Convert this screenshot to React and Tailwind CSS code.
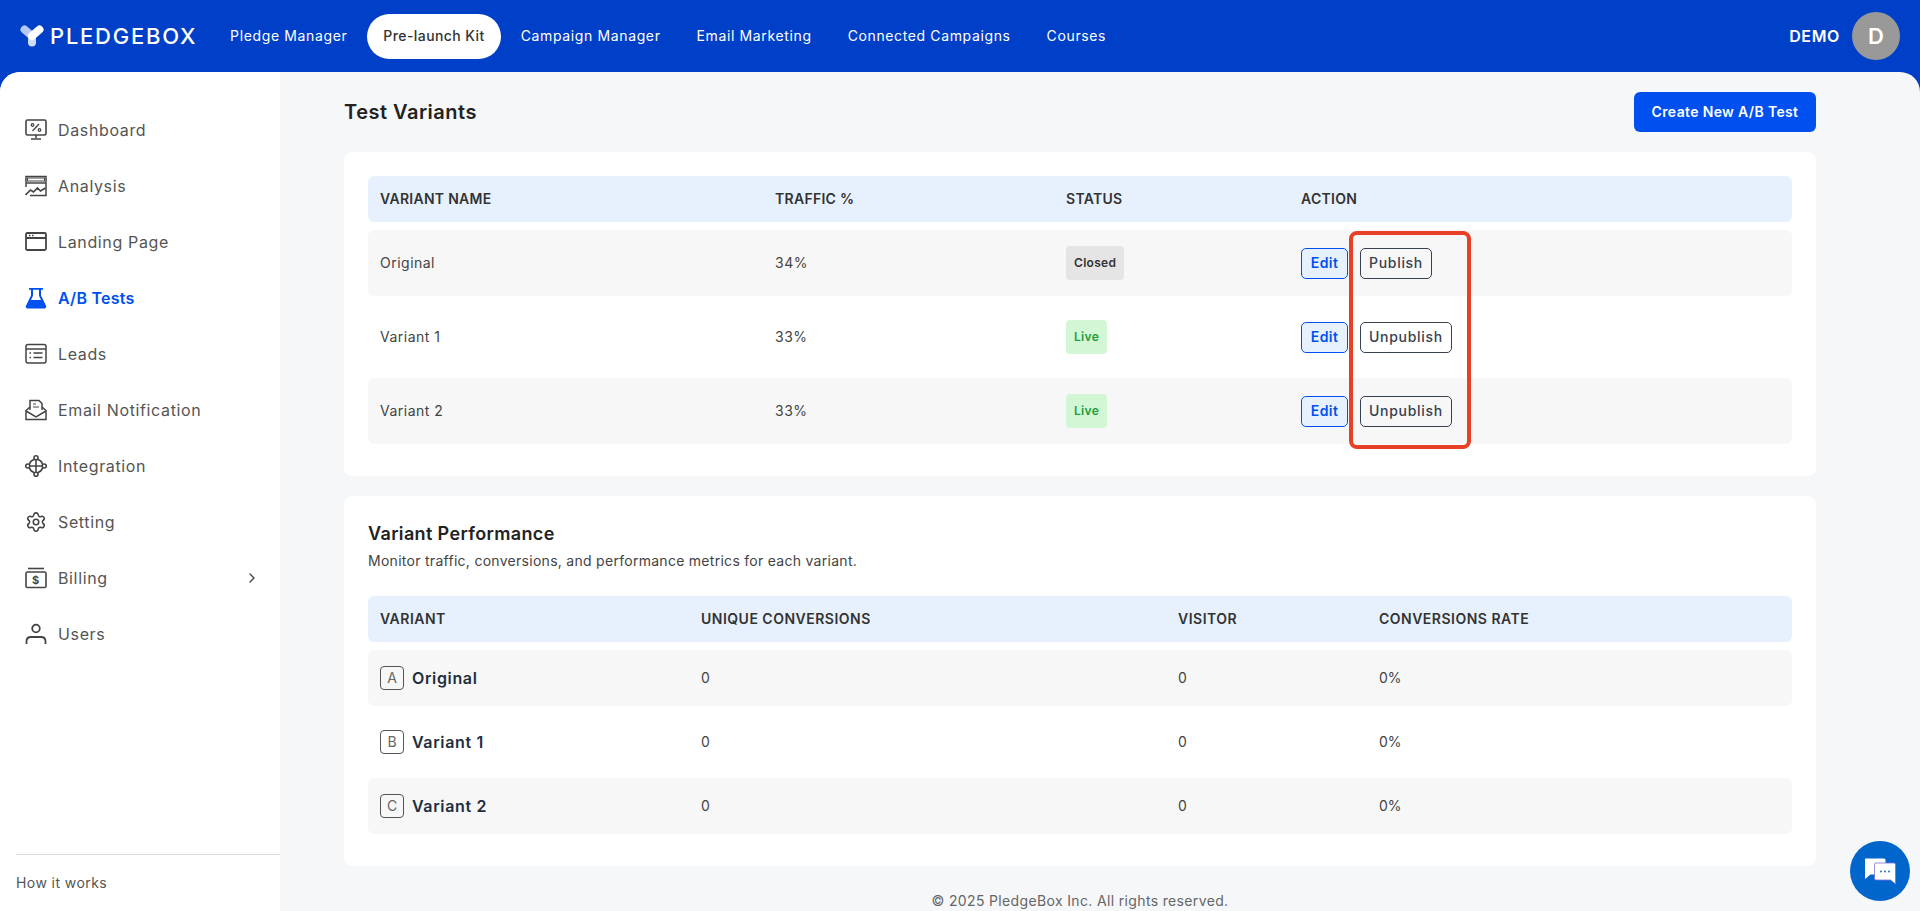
import { ChevronRight, Settings } from 'lucide-react';

const navLinks = ['Pledge Manager', 'Pre-launch Kit', 'Campaign Manager', 'Email Marketing', 'Connected Campaigns', 'Courses'];

const IconDashboard = () => (
  <svg viewBox="0 0 22 22" className="w-[22px] h-[22px]" fill="none" stroke="currentColor" strokeWidth="1.6">
    <rect x="1" y="1" width="20" height="15" rx="1.5" />
    <path d="M11 16v3M6 20h10" />
    <path d="M7.5 12l6.5-7" strokeWidth="1.3" />
    <circle cx="7.5" cy="6" r="1.3" strokeWidth="1.2" />
    <circle cx="14.5" cy="11" r="1.3" strokeWidth="1.2" />
  </svg>
);

const IconAnalysis = () => (
  <svg viewBox="0 0 22 22" className="w-[22px] h-[22px]" fill="none" stroke="currentColor" strokeWidth="1.5">
    <path d="M1 12V1.5h20v19H5" />
    <path d="M1 8h20" />
    <rect x="2.5" y="3" width="17" height="3" strokeWidth="1" />
    <path d="M0.5 20l5-5 3 2 4-4 3 3 5-3" strokeWidth="1.7" />
  </svg>
);

const IconLanding = () => (
  <svg viewBox="0 0 22 22" className="w-[22px] h-[22px]" fill="none" stroke="currentColor" strokeWidth="1.8">
    <rect x="1" y="2" width="20" height="17" rx="1.5" />
    <path d="M1 7h20" />
    <path d="M4 4.5h1.5M7 4.5h1.5" strokeWidth="1.3" />
  </svg>
);

const IconFlask = () => (
  <svg viewBox="0 0 22 22" className="w-[22px] h-[22px]" fill="currentColor">
    <path d="M4 1h14v1.800h-2v5.600l5 10.400c.6 1.300 0 2.600-1.600 2.600H2.600C1 21.400.4 20.100 1 18.800L6 8.400V2.800H4V1zm4 1.800v6L6 13h10l-2-4.200v-6H8z" fillRule="evenodd" />
  </svg>
);

const IconLeads = () => (
  <svg viewBox="0 0 22 22" className="w-[22px] h-[22px]" fill="none" stroke="currentColor" strokeWidth="1.5">
    <rect x="1" y="1.500" width="20" height="18.500" rx="2" />
    <path d="M1 6h20" />
    <path d="M4.500 10h1.500M8.500 10h9M4.500 14.500h1.500M8.500 14.500h9" strokeWidth="1.700" />
  </svg>
);

const IconEmail = () => (
  <svg viewBox="0 0 22 22" className="w-[22px] h-[22px]" fill="none" stroke="currentColor" strokeWidth="1.5">
    <path d="M5 11V1.500h9l3 3V11" />
    <path d="M8 5h3M8 8h6" strokeWidth="1.2" />
    <path d="M5 8l-4 3.500V20.500h20V11.500L17 8" />
    <path d="M1 12l10 6 10-6" />
  </svg>
);

const IconIntegration = () => (
  <svg viewBox="0 0 22 22" className="w-[22px] h-[22px]" fill="none" stroke="currentColor" strokeWidth="1.6">
    <circle cx="11" cy="2.800" r="2" />
    <circle cx="11" cy="19.200" r="2" />
    <circle cx="2.800" cy="11" r="2" />
    <circle cx="19.200" cy="11" r="2" />
    <path d="M11 5v12M5 11h12" />
    <path d="M9 4.500C6.800 5.200 5.200 6.800 4.500 9M13 4.500c2.200.7 3.800 2.300 4.500 4.500M9 17.500c-2.200-.7-3.800-2.300-4.500-4.500M13 17.500c2.200-.7 3.800-2.300 4.500-4.500" />
  </svg>
);

const IconBilling = () => (
  <svg viewBox="0 0 22 22" className="w-[22px] h-[22px]" fill="none" stroke="currentColor" strokeWidth="1.6">
    <path d="M3 1.500h16" />
    <rect x="1" y="5" width="20" height="15.500" rx="1.500" />
    <text x="11" y="17" textAnchor="middle" fontSize="11" fontWeight="700" fill="currentColor" stroke="none" fontFamily="Inter, sans-serif">$</text>
  </svg>
);

const IconUsers = () => (
  <svg viewBox="0 0 22 22" className="w-[22px] h-[22px]" fill="none" stroke="currentColor" strokeWidth="1.8">
    <circle cx="11" cy="5.500" r="3.800" />
    <path d="M1.500 21v-2.500c0-3 2-4.500 4.500-4.500h10c2.500 0 4.500 1.500 4.500 4.500V21" />
  </svg>
);

const sideItems = [
  { label: 'Dashboard', icon: <IconDashboard /> },
  { label: 'Analysis', icon: <IconAnalysis /> },
  { label: 'Landing Page', icon: <IconLanding /> },
  { label: 'A/B Tests', icon: <IconFlask />, active: true },
  { label: 'Leads', icon: <IconLeads /> },
  { label: 'Email Notification', icon: <IconEmail /> },
  { label: 'Integration', icon: <IconIntegration /> },
  { label: 'Setting', icon: <Settings className="w-[22px] h-[22px]" strokeWidth={1.7} /> },
  { label: 'Billing', icon: <IconBilling />, arrow: true },
  { label: 'Users', icon: <IconUsers /> },
];

const variants = [
  { name: 'Original', traffic: '34%', status: 'Closed', action: 'Publish' },
  { name: 'Variant 1', traffic: '33%', status: 'Live', action: 'Unpublish' },
  { name: 'Variant 2', traffic: '33%', status: 'Live', action: 'Unpublish' },
];

const performance = [
  { letter: 'A', name: 'Original' },
  { letter: 'B', name: 'Variant 1' },
  { letter: 'C', name: 'Variant 2' },
];

function Logo() {
  return (
    <div className="flex items-center gap-[6px] text-white">
      <svg viewBox="0 0 24 22" className="w-6 h-[22px]" fill="none" strokeLinecap="round" strokeWidth="8">
        <path d="M4.500 4.500L12 11" stroke="#b5c9f7" />
        <path d="M12 11v6.500" stroke="#cfdcf9" />
        <path d="M19.500 4.500L12 11" stroke="#ffffff" />
      </svg>
      <span className="text-[22px] font-medium tracking-[0.08em]">PLEDGEBOX</span>
    </div>
  );
}

function Header() {
  return (
    <header className="h-[72px] shrink-0 flex items-center pl-5 pr-5">
      <Logo />
      <nav className="flex items-center ml-[15px]">
        {navLinks.map((link) => (
          <a
            key={link}
            className={
              link === 'Pre-launch Kit'
                ? 'h-[45px] mx-[2px] px-4 flex items-center rounded-full bg-white text-[#333] text-sm font-medium tracking-[0.03em]'
                : 'h-[45px] px-[18px] flex items-center text-white text-sm tracking-[0.045em]'
            }
          >
            {link}
          </a>
        ))}
      </nav>
      <div className="ml-auto flex items-center gap-3">
        <span className="text-white text-base font-semibold tracking-[0.04em]">DEMO</span>
        <div className="w-12 h-12 rounded-full bg-[#999] text-white text-[22px] font-semibold flex items-center justify-center">D</div>
      </div>
    </header>
  );
}

function Sidebar() {
  return (
    <aside className="w-[280px] shrink-0 bg-white flex flex-col pt-[30px]">
      {sideItems.map((item) => (
        <a
          key={item.label}
          className={`h-14 flex items-center pl-[25px] pr-5 gap-[11px] text-base ${
            item.active ? 'text-[#0050f0] font-semibold tracking-[0.015em]' : 'text-[#555] tracking-[0.04em]'
          }`}
        >
          <span className={item.active ? 'text-[#0050f0]' : 'text-[#444]'}>{item.icon}</span>
          {item.label}
          {item.arrow && <ChevronRight className="w-4 h-4 ml-auto text-[#444]" />}
        </a>
      ))}
      <div className="mt-auto ml-4 border-t border-[#ddd] h-[57px] flex items-center text-sm text-[#555] tracking-[0.03em]">
        How it works
      </div>
    </aside>
  );
}

function VariantsTable() {
  const cols = 'grid grid-cols-[395px_291px_235px_1fr] items-center px-3';
  return (
    <section className="mt-5 bg-white rounded-lg px-6 pt-6 pb-8">
      <div className={`${cols} h-[46px] bg-[#e7f1fe] rounded-md text-sm font-semibold text-[#333] tracking-[0.02em]`}>
        <div>VARIANT NAME</div>
        <div>TRAFFIC %</div>
        <div>STATUS</div>
        <div>ACTION</div>
      </div>
      <div className="mt-2 flex flex-col gap-2">
        {variants.map((v, i) => (
          <div key={v.name} className={`${cols} h-[66px] rounded-md text-sm text-[#444] tracking-[0.035em] ${i % 2 === 0 ? 'bg-[#f7f7f7]' : 'bg-white'}`}>
            <div>{v.name}</div>
            <div>{v.traffic}</div>
            <div>
              {v.status === 'Closed' ? (
                <span className="inline-flex items-center h-[34px] px-2 rounded bg-[#e5e5e5] text-xs font-semibold text-[#333] tracking-[0.025em]">Closed</span>
              ) : (
                <span className="inline-flex items-center h-[34px] px-2 rounded bg-[#d3f6d5] text-xs font-semibold text-[#1b9e3c] tracking-[0.025em]">Live</span>
              )}
            </div>
            <div className="flex items-center gap-3">
              <button className="h-[31px] w-[47px] rounded-[5px] border border-[#0050f0] bg-[#e7f1fe] text-sm font-semibold text-[#0050f0] tracking-[0.03em]">Edit</button>
              <button className="h-[31px] px-2 rounded-[5px] border border-[#374151] text-sm font-medium text-[#374151] tracking-[0.05em]">{v.action}</button>
            </div>
          </div>
        ))}
      </div>
    </section>
  );
}

function PerformanceTable() {
  const cols = 'grid grid-cols-[321px_477px_201px_1fr] items-center px-3';
  return (
    <section className="mt-5 bg-white rounded-lg px-6 pt-6 pb-8">
      <h2 className="text-lg font-semibold text-[#222] leading-[27px] tracking-[0.02em]">Variant Performance</h2>
      <p className="mt-1 text-sm text-[#444] tracking-[0.02em]">Monitor traffic, conversions, and performance metrics for each variant.</p>
      <div className={`${cols} mt-[25px] h-[46px] bg-[#e7f1fe] rounded-md text-sm font-semibold text-[#333] tracking-[0.035em]`}>
        <div>VARIANT</div>
        <div>UNIQUE CONVERSIONS</div>
        <div>VISITOR</div>
        <div>CONVERSIONS RATE</div>
      </div>
      <div className="mt-2 flex flex-col gap-2">
        {performance.map((p, i) => (
          <div key={p.name} className={`${cols} h-14 rounded-md text-sm text-[#444] ${i % 2 === 0 ? 'bg-[#f7f7f7]' : 'bg-white'}`}>
            <div className="flex items-center gap-2">
              <span className="w-6 h-6 rounded border border-[#555] flex items-center justify-center text-sm text-[#666]">{p.letter}</span>
              <span className="text-base font-semibold text-[#222e3e] tracking-[0.04em]">{p.name}</span>
            </div>
            <div>0</div>
            <div>0</div>
            <div>0%</div>
          </div>
        ))}
      </div>
    </section>
  );
}

export default function App() {
  return (
    <div className="relative h-screen overflow-hidden flex flex-col bg-[#0040c8] font-['Inter',sans-serif]">
      <Header />
      <div className="flex-1 min-h-0 flex rounded-t-[20px] overflow-hidden bg-[#f6f7f9]">
        <Sidebar />
        <main className="flex-1 pt-5 pl-16 pr-[104px]">
          <div className="h-10 flex items-center justify-between">
            <h1 className="text-xl font-semibold text-[#222] tracking-[0.025em]">Test Variants</h1>
            <button className="h-10 w-[182px] rounded-md bg-[#0050f0] text-white text-sm font-semibold tracking-[0.025em]">Create New A/B Test</button>
          </div>
          <VariantsTable />
          <PerformanceTable />
          <footer className="mt-[25px] text-center text-sm leading-5 text-[#666] tracking-[0.025em]">© 2025 PledgeBox Inc. All rights reserved.</footer>
        </main>
      </div>

      {/* annotation over the action column */}
      <div className="absolute left-[1349px] top-[231px] w-[122px] h-[218px] border-4 border-[#e83f26] rounded-lg pointer-events-none" />

      <button className="absolute left-[1850px] top-[841px] w-[60px] h-[60px] rounded-full bg-[#0066cc] flex items-center justify-center">
        <svg viewBox="0 0 32 28" className="w-8 h-7">
          <path d="M2 1.500h18a1.500 1.500 0 0 1 1.500 1.500v13a1.500 1.500 0 0 1-1.500 1.500H6.500L1 22V3a1 1 0 0 1 1-1.500z" fill="#fff" />
          <path d="M12 6h18a1.500 1.500 0 0 1 1.500 1.500v14V27l-5-4H12a1.500 1.500 0 0 1-1.500-1.500v-14A1.500 1.500 0 0 1 12 6z" fill="#fff" stroke="#7a6fe0" strokeWidth="0.8" />
          <circle cx="17" cy="14.500" r="0.900" fill="#0066cc" />
          <circle cx="21" cy="14.500" r="0.900" fill="#0066cc" />
          <circle cx="25" cy="14.500" r="0.900" fill="#0066cc" />
        </svg>
      </button>
    </div>
  );
}
